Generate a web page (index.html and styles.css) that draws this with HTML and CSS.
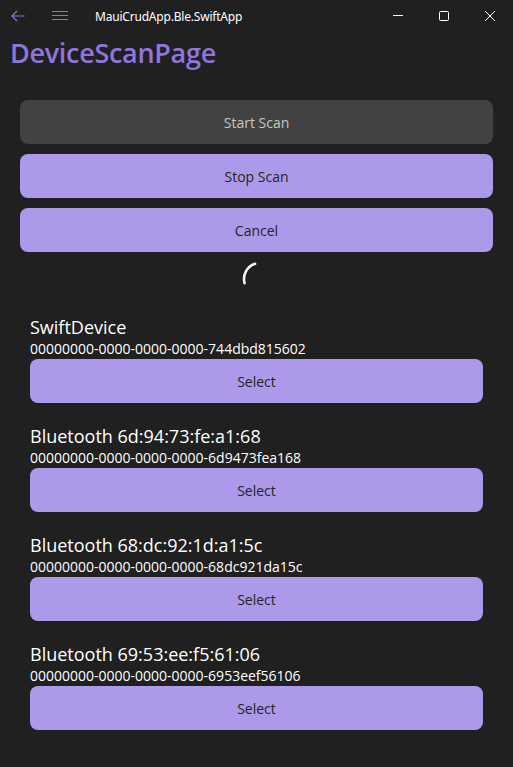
FILE: index.html
```html
<!DOCTYPE html>
<html>
<head>
<meta charset="utf-8">
<link rel="stylesheet" href="styles.css">
</head>
<body>
<div class="titlebar">
  <div class="tb-left">
    <svg class="tb-back" width="14" height="12" viewBox="0 0 14 12"><path d="M13.5 6H1M6 1L1 6l5 5" fill="none" stroke="#8a72d6" stroke-width="1.2"/></svg>
    <svg class="tb-menu" width="16" height="10" viewBox="0 0 16 10"><path d="M0 0.5h16M0 4.5h16M0 8.5h16" fill="none" stroke="#8a72d6" stroke-width="1.1"/></svg>
    <span class="tb-title">MauiCrudApp.Ble.SwiftApp</span>
  </div>
  <div class="tb-controls">
    <svg class="wc" width="46" height="32" viewBox="0 0 46 32"><path d="M18 15.5h10" stroke="#fff" stroke-width="1"/></svg>
    <svg class="wc" width="46" height="32" viewBox="0 0 46 32"><rect x="18.5" y="11.5" width="9" height="9" rx="1" fill="none" stroke="#fff" stroke-width="1"/></svg>
    <svg class="wc" width="46" height="32" viewBox="0 0 46 32"><path d="M18 11l10 10M28 11l-10 10" stroke="#fff" stroke-width="1"/></svg>
  </div>
</div>
<h1 class="page-title">DeviceScanPage</h1>
<div class="actions">
  <button class="btn btn-disabled">Start Scan</button>
  <button class="btn">Stop Scan</button>
  <button class="btn">Cancel</button>
</div>
<div class="spinner-row">
  <svg class="spinner" width="40" height="40" viewBox="0 0 40 40"><path d="M4.55 24.14A16 16 0 0 1 15.06 4.78" fill="none" stroke="#f2f2f2" stroke-width="2.6" stroke-linecap="round"/></svg>
</div>
<div class="devices">
  <div class="device">
    <div class="dev-name">SwiftDevice</div>
    <div class="dev-id">00000000-0000-0000-0000-744dbd815602</div>
    <button class="btn">Select</button>
  </div>
  <div class="device">
    <div class="dev-name">Bluetooth 6d:94:73:fe:a1:68</div>
    <div class="dev-id">00000000-0000-0000-0000-6d9473fea168</div>
    <button class="btn">Select</button>
  </div>
  <div class="device">
    <div class="dev-name">Bluetooth 68:dc:92:1d:a1:5c</div>
    <div class="dev-id">00000000-0000-0000-0000-68dc921da15c</div>
    <button class="btn">Select</button>
  </div>
  <div class="device">
    <div class="dev-name">Bluetooth 69:53:ee:f5:61:06</div>
    <div class="dev-id">00000000-0000-0000-0000-6953eef56106</div>
    <button class="btn">Select</button>
  </div>
</div>
</body>
</html>
```
FILE: styles.css
```css
* { box-sizing: border-box; }
html, body {
  margin: 0;
  padding: 0;
  background: #202020;
  color: #ffffff;
  font-family: "Open Sans", "Noto Sans", sans-serif;
  overflow: hidden;
}
.titlebar {
  height: 32px;
  display: flex;
  justify-content: space-between;
  align-items: center;
}
.tb-left {
  display: flex;
  align-items: center;
  padding-left: 11px;
}
.tb-back { display: block; }
.tb-menu { display: block; margin-left: 27px; margin-top: 0; }
.tb-title {
  margin-left: 27px;
  font-family: "Noto Sans", sans-serif;
  font-size: 12px;
  color: #ffffff;
  letter-spacing: -0.2px;
}
.tb-controls { display: flex; }
.wc { display: block; }
.page-title {
  margin: 0;
  padding: 3px 0 0 10px;
  height: 68px;
  font-family: "Open Sans", sans-serif;
  font-weight: 600;
  font-size: 27px;
  line-height: 36px;
  color: #8f76dc;
  letter-spacing: -0.3px;
}
.actions {
  display: flex;
  flex-direction: column;
  gap: 10px;
  padding: 0 20px;
}
.btn {
  display: block;
  width: 100%;
  height: 44px;
  border: none;
  border-radius: 8px;
  background: #ac99ea;
  color: #242424;
  font-family: "Open Sans", sans-serif;
  font-size: 14px;
  padding: 0;
}
.btn-disabled {
  background: #424242;
  color: #c8c8c8;
}
.spinner-row {
  display: flex;
  justify-content: center;
  padding-left: 6px;
  margin-top: 7px;
  height: 40px;
}
.spinner { display: block; }
.devices {
  margin-top: 16px;
  padding: 0 30px;
  display: flex;
  flex-direction: column;
  gap: 21px;
}
.dev-name {
  font-size: 18px;
  line-height: 24px;
  color: #ffffff;
}
.dev-id {
  font-size: 14px;
  line-height: 20px;
  color: #ffffff;
}
```
